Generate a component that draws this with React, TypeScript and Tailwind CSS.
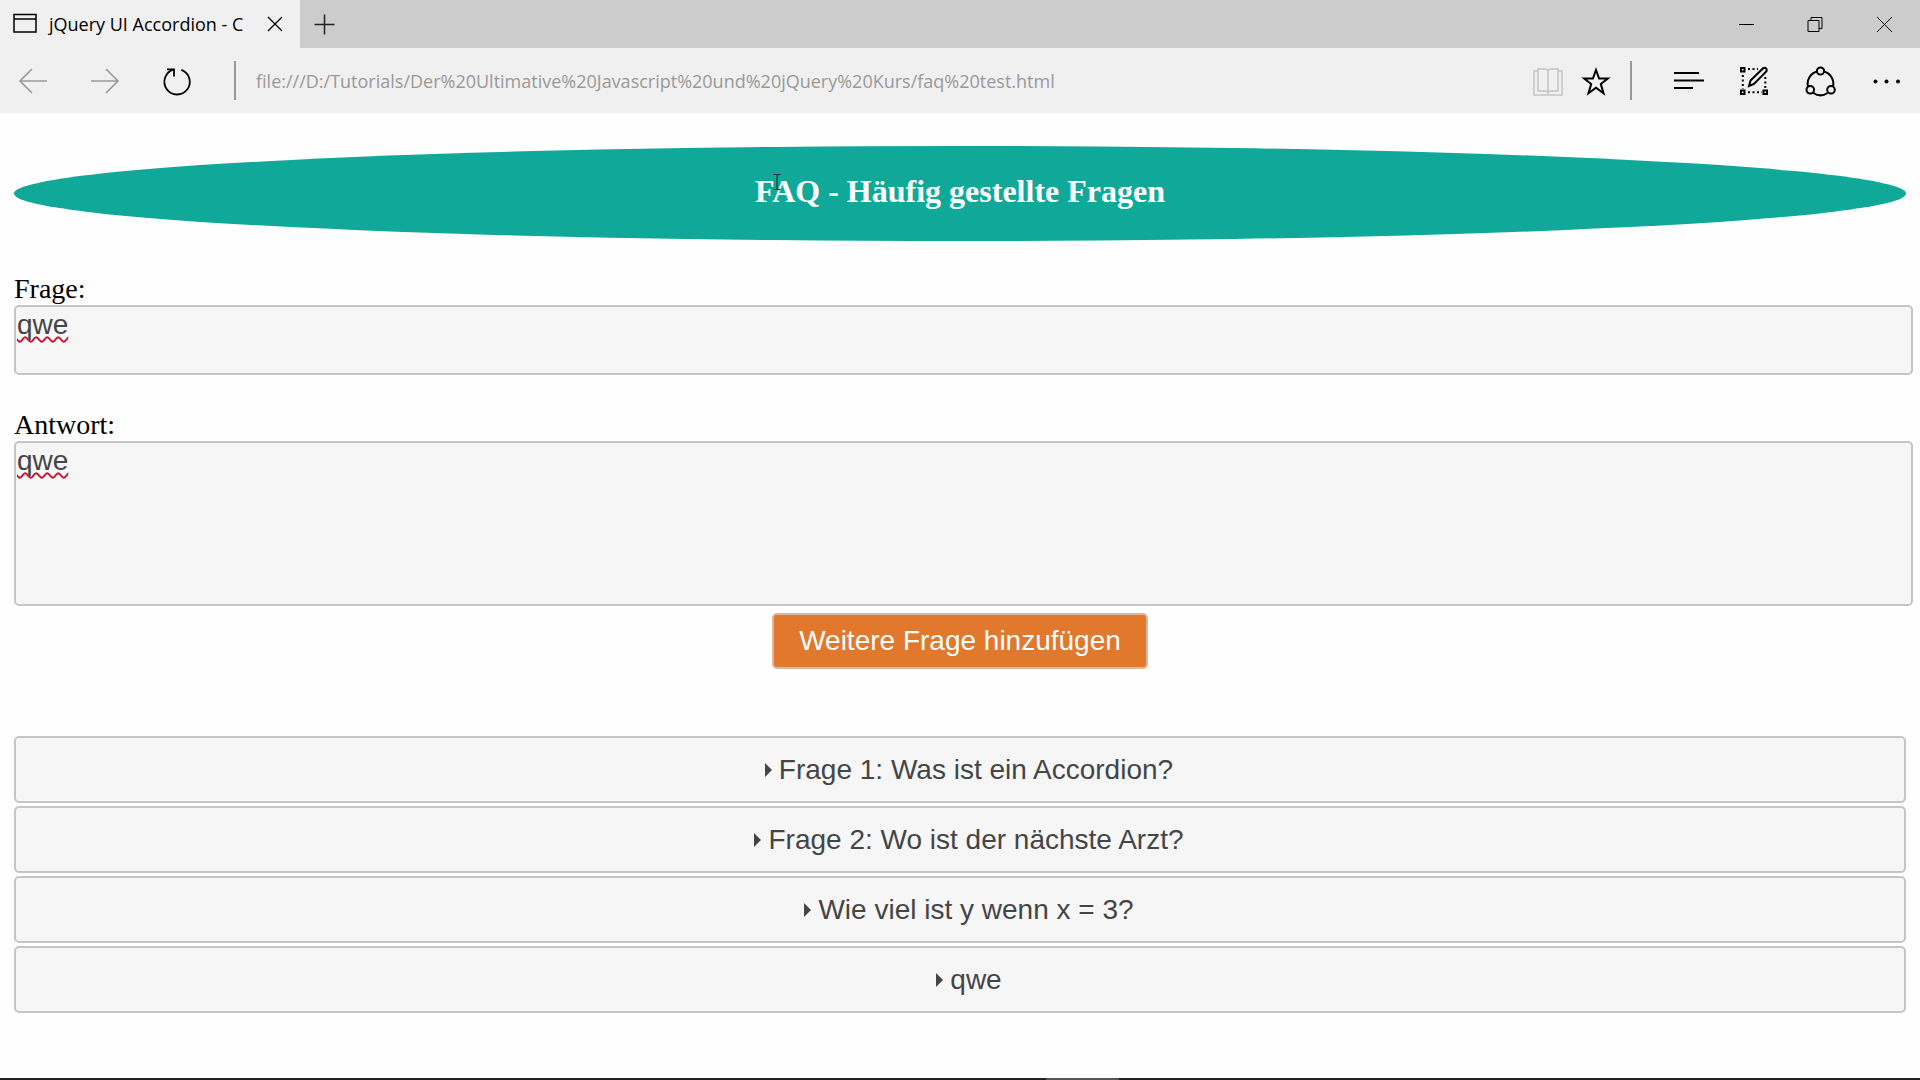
import { useState } from 'react'
import type { ReactNode } from 'react'

const PAGE_URL =
  'file:///D:/Tutorials/Der%20Ultimative%20Javascript%20und%20jQuery%20Kurs/faq%20test.html'

const initialQuestions = [
  'Frage 1: Was ist ein Accordion?',
  'Frage 2: Wo ist der nächste Arzt?',
  'Wie viel ist y wenn x = 3?',
  'qwe',
]

interface IconProps {
  children: ReactNode
  className?: string
}

function Icon({ children, className = 'text-black' }: IconProps) {
  return (
    <svg
      viewBox="0 0 32 32"
      className={`size-8 shrink-0 ${className}`}
      fill="none"
      stroke="currentColor"
      strokeWidth="2"
      aria-hidden="true"
    >
      {children}
    </svg>
  )
}

function TabBar() {
  return (
    <div className="flex h-12 bg-[#cccccc]">
      <div className="flex w-[300px] items-center bg-[#f0f0f0] pl-[9px]">
        <Icon>
          <path d="M5 6.5h22v17.5H5z" strokeWidth="1.5" />
          <path d="M5 11h22" strokeWidth="1.5" />
        </Icon>
        <span className="ml-2 w-[204px] text-lg whitespace-nowrap text-black">
          jQuery UI Accordion - C
        </span>
        <button type="button" aria-label="Tab schließen" className="ml-1.5">
          <Icon>
            <path d="M9 9l14 14M23 9L9 23" strokeWidth="1.3" />
          </Icon>
        </button>
      </div>
      <button type="button" aria-label="Neuer Tab" className="ml-2">
        <Icon className="text-[#222222]">
          <path d="M16.5 6.5v20M6.5 16.5h20" strokeWidth="1.5" />
        </Icon>
      </button>
      <div className="mr-0.5 ml-auto flex">
        <button type="button" aria-label="Minimieren" className="flex w-[69px] items-center justify-center">
          <Icon>
            <path d="M9 16.5h15" strokeWidth="1" />
          </Icon>
        </button>
        <button type="button" aria-label="Verkleinern" className="flex w-[69px] items-center justify-center">
          <Icon>
            <path d="M9 12.500h11v11H9zM12 12.500v-3h11v11h-3" strokeWidth="1" />
          </Icon>
        </button>
        <button type="button" aria-label="Schließen" className="flex w-[69px] items-center justify-center">
          <Icon>
            <path d="M9 9l15 15M24 9L9 24" strokeWidth="1" />
          </Icon>
        </button>
      </div>
    </div>
  )
}

function Toolbar() {
  return (
    <div className="flex h-[65px] items-center bg-[#f0f0f0] pl-px">
      <div className="flex gap-2">
        <button type="button" aria-label="Zurück" className="flex w-16 justify-center">
          <Icon className="text-[#999999]">
            <path d="M30 16H3M15 4L3 16l12 12" strokeWidth="1.6" />
          </Icon>
        </button>
        <button type="button" aria-label="Vorwärts" className="flex w-16 justify-center">
          <Icon className="text-[#999999]">
            <path d="M2 16h27M17 4l12 12-12 12" strokeWidth="1.6" />
          </Icon>
        </button>
        <button type="button" aria-label="Aktualisieren" className="flex w-16 justify-center">
          <Icon>
            <path d="M20.300 4.800A12.700 12.700 0 1 1 12.500 4.600" strokeWidth="1.8" />
            <path d="M6 4.400h7v7" strokeWidth="1.8" />
          </Icon>
        </button>
      </div>
      <div className="ml-[25px] h-[39px] w-0.5 bg-[#999999]" />
      <input
        type="text"
        aria-label="Adresse"
        defaultValue={PAGE_URL}
        className="ml-5 min-w-0 flex-1 bg-transparent text-lg text-[#999999] outline-none"
      />
      <button type="button" aria-label="Leseansicht">
        <Icon className="text-[#c4c4c4]">
          <path
            d="M6 6H2v24h28V6h-4M6 4h6.500q3 0 3.500 2q.5-2 3.500-2H26v22h-6.500q-3 0-3.500 1.500q-.5-1.500-3.500-1.500H6zM16 6v21"
            strokeWidth="1.5"
          />
        </Icon>
      </button>
      <button type="button" aria-label="Zu Favoriten hinzufügen" className="ml-4">
        <Icon>
          <path d="M16 5l3.100 8.600h8.700l-7 5.400 2.700 9.200-7.500-5.500-7.500 5.500 2.700-9.200-7-5.400h8.700z" strokeWidth="2" />
        </Icon>
      </button>
      <div className="ml-[18px] h-[39px] w-0.5 bg-[#999999]" />
      <div className="mr-px ml-[23px] flex">
        <button type="button" aria-label="Hub" className="flex w-[66px] justify-center">
          <Icon>
            <path d="M2 8h25M2 15.500h30M2 23h19" strokeWidth="2" />
          </Icon>
        </button>
        <button type="button" aria-label="Webseitennotiz" className="flex w-[66px] justify-center">
          <Icon>
            <path d="M3 3h3.500v3.500H3zM3 25.500h3.500V29H3zM25.500 25.500H29V29h-3.500z" />
            <path d="M10 4h10M4.800 10v14M10 27.300h14M27.300 12v12" strokeDasharray="2 2.500" />
            <path d="M11 21l1.500-5.500L25.200 3.200q2-1 3 .3t.3 2.700L16 19z" />
          </Icon>
        </button>
        <button type="button" aria-label="Teilen" className="flex w-[66px] justify-center">
          <Icon>
            <path d="M13 6.500a12.500 12.500 0 0 0-9 15M20 6.500a12.500 12.500 0 0 1 9 15M9.500 28a12.500 12.500 0 0 0 14 0" />
            <circle cx="16.500" cy="6" r="3.600" />
            <circle cx="6.300" cy="24.800" r="3.800" />
            <circle cx="27" cy="24.800" r="3.800" />
          </Icon>
        </button>
        <button type="button" aria-label="Weitere Aktionen" className="flex w-[66px] justify-center">
          <Icon>
            <g fill="currentColor" stroke="none">
              <circle cx="5.500" cy="16.500" r="2" />
              <circle cx="16.500" cy="16.500" r="2" />
              <circle cx="28" cy="16.500" r="2" />
            </g>
          </Icon>
        </button>
      </div>
    </div>
  )
}

interface FieldProps {
  id: string
  label: string
  value: string
  onChange: (value: string) => void
  className: string
}

function Field({ id, label, value, onChange, className }: FieldProps) {
  return (
    <div className="flex flex-col">
      <label htmlFor={id} className="font-['Liberation_Serif',serif] text-[28px] leading-8 text-black">
        {label}
      </label>
      <textarea
        id={id}
        value={value}
        spellCheck={false}
        onChange={e => onChange(e.target.value)}
        className={`-mr-[7px] resize-none overflow-hidden rounded-[5px] border-2 border-[#c5c5c5] bg-[#f6f6f6] px-px text-[28px] leading-9 text-[#454545] underline decoration-[#c8102e] decoration-wavy decoration-2 underline-offset-2 outline-none [text-decoration-skip-ink:none] ${className}`}
      />
    </div>
  )
}

export default function App() {
  const [question, setQuestion] = useState('qwe')
  const [answer, setAnswer] = useState('qwe')
  const [questions, setQuestions] = useState(initialQuestions)

  const addQuestion = () => {
    if (!question.trim()) return
    setQuestions([...questions, question])
  }

  return (
    <div className="flex min-h-screen flex-col bg-[#fefefe]">
      <header className="font-['Open_Sans','Noto_Sans',sans-serif]">
        <TabBar />
        <Toolbar />
      </header>

      <main className="flex-1 px-3.5 pt-[33px] font-['Liberation_Sans',Arial,sans-serif]">
        <div className="relative flex h-[95px] items-center justify-center rounded-[50%] bg-[#10a898]">
          <h1 className="pb-1.5 font-['Liberation_Serif',serif] text-[32px] leading-9 font-bold text-white">
            FAQ - Häufig gestellte Fragen
          </h1>
          {/* text cursor */}
          <svg
            viewBox="0 0 8 16"
            className="absolute top-7 left-[40%] ml-0.5 h-4 w-2"
            fill="none"
            stroke="#222222"
            aria-hidden="true"
          >
            <path d="M0.500 0.500h3l.5 1 .5-1h3M4 1v14M0.500 15.500h3l.5-1 .5 1h3" />
          </svg>
        </div>

        <form className="flex flex-col pt-8" onSubmit={e => e.preventDefault()}>
          <Field id="frage" label="Frage:" value={question} onChange={setQuestion} className="h-[70px]" />
          <div className="h-[34px]" />
          <Field id="antwort" label="Antwort:" value={answer} onChange={setAnswer} className="h-[165px]" />
          <button
            type="button"
            onClick={addQuestion}
            className="mt-[7px] h-14 self-center rounded-[5px] border-2 border-[#d9b8a0] bg-[#e2782c] px-[25px] text-[28px] leading-9 text-white"
          >
            Weitere Frage hinzufügen
          </button>
        </form>

        <div className="mt-[67px] flex flex-col gap-[3px]">
          {questions.map((title, i) => (
            <button
              key={i}
              type="button"
              className="flex h-[67px] items-center justify-center rounded-[5px] border-2 border-[#c5c5c5] bg-[#f6f6f6] text-[28px] leading-9 text-[#454545]"
            >
              <svg viewBox="0 0 32 32" className="size-8" fill="currentColor" aria-hidden="true">
                <path d="M18 9l7 7-7 7z" />
              </svg>
              {title}
            </button>
          ))}
        </div>
      </main>

      <footer className="flex h-0.5 justify-center bg-[#222222]">
        <div className="ml-[245px] w-[73px] bg-[#555555]" />
      </footer>
    </div>
  )
}
